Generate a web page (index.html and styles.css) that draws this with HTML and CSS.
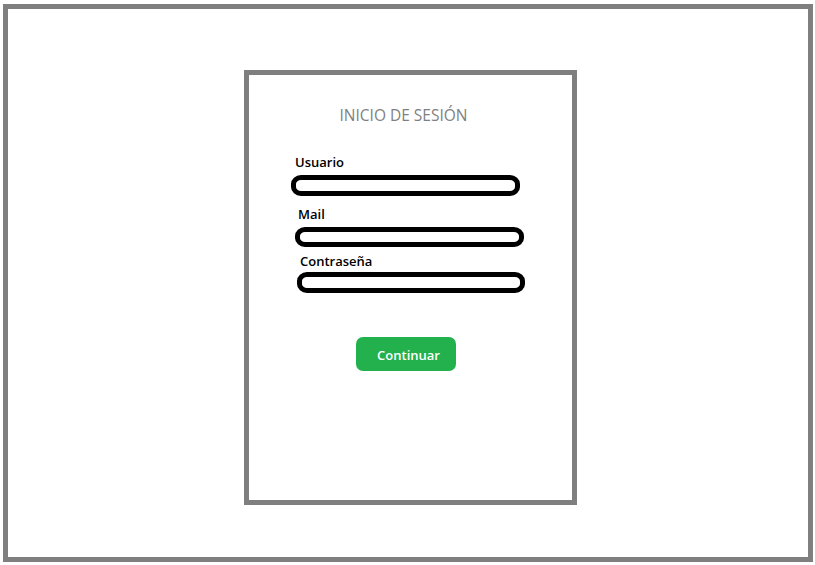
FILE: index.html
```html
<!DOCTYPE html>
<html lang="es">
<head>
<meta charset="utf-8">
<title>Inicio de sesión</title>
<link rel="stylesheet" href="styles.css">
</head>
<body>
<div class="frame">
  <div class="card">
    <h1 class="title">INICIO DE SESIÓN</h1>
    <label class="label label-user">Usuario</label>
    <div class="field field-user"></div>
    <label class="label label-mail">Mail</label>
    <div class="field field-mail"></div>
    <label class="label label-pass">Contraseña</label>
    <div class="field field-pass"></div>
    <button class="btn">Continuar</button>
  </div>
</div>
</body>
</html>
```
FILE: styles.css
```css
html, body {
  margin: 0;
  padding: 0;
  background: #ffffff;
}
body {
  font-family: "Open Sans", "Noto Sans", sans-serif;
  width: 815px;
  height: 565px;
  overflow: hidden;
}
.frame {
  box-sizing: border-box;
  margin: 4px 0 0 3px;
  width: 810px;
  height: 558px;
  border: 5px solid #7f7f7f;
  padding-top: 61px;
  padding-left: 236px;
}
.card {
  box-sizing: border-box;
  width: 333px;
  height: 435px;
  border: 5px solid #7f7f7f;
  display: flex;
  flex-direction: column;
  align-items: flex-start;
  padding-top: 30px;
}
.title {
  margin: 0;
  align-self: center;
  font-size: 15.5px;
  line-height: 20px;
  font-weight: 400;
  color: #7f7f7f;
  padding-right: 14px;
}
.label {
  display: block;
  font-size: 13px;
  line-height: 16px;
  font-weight: 600;
  color: #000;
}
.label-user { margin: 29px 0 0 46px; }
.label-mail { margin: 10px 0 0 49px; }
.label-pass { margin: 6px 0 0 51px; }
.field {
  box-sizing: border-box;
  height: 21px;
  border: 5px solid #000;
  border-radius: 10px / 9px;
  background: #fff;
}
.field-user { margin: 5px 0 0 42px; width: 229px; }
.field-mail { margin: 5px 0 0 46px; width: 229px; height: 20px; }
.field-pass { margin: 3px 0 0 48px; width: 228px; }
.btn {
  margin: 44px 0 0 107px;
  width: 100px;
  height: 34px;
  border: none;
  border-radius: 7px;
  background: #22b14c;
  color: #fff;
  font-family: "Open Sans", "Noto Sans", sans-serif;
  font-size: 13px;
  font-weight: 600;
  padding: 2px 0 0 5px;
}
```
